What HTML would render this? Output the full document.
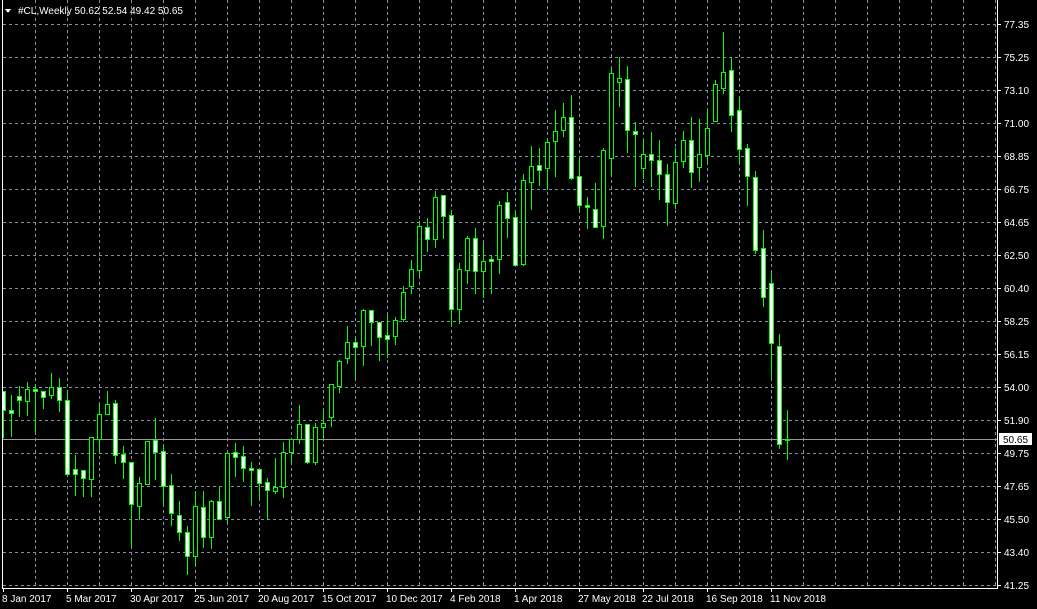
<!DOCTYPE html>
<html><head><meta charset="utf-8"><style>
html,body{margin:0;padding:0;background:#000;width:1037px;height:609px;overflow:hidden}
svg{display:block}
text{font-family:"Liberation Sans",sans-serif;font-size:10px;fill:#fff}
</style></head><body>
<svg width="1037" height="609" xmlns="http://www.w3.org/2000/svg" shape-rendering="crispEdges">
<g stroke="#8590a0" stroke-width="1" stroke-dasharray="3 3" fill="none">
<path d="M3 24.5H996M3 57.5H996M3 90.5H996M3 123.5H996M3 156.5H996M3 189.5H996M3 222.5H996M3 255.5H996M3 288.5H996M3 321.5H996M3 354.5H996M3 387.5H996M3 420.5H996M3 453.5H996M3 486.5H996M3 519.5H996M3 552.5H996M3 585.5H996"/>
<path d="M35.5 0V588M67.5 0V588M99.5 0V588M131.5 0V588M163.5 0V588M195.5 0V588M227.5 0V588M259.5 0V588M291.5 0V588M323.5 0V588M355.5 0V588M387.5 0V588M419.5 0V588M451.5 0V588M483.5 0V588M515.5 0V588M547.5 0V588M579.5 0V588M611.5 0V588M643.5 0V588M675.5 0V588M707.5 0V588M739.5 0V588M771.5 0V588M803.5 0V588M835.5 0V588M867.5 0V588M899.5 0V588M931.5 0V588M963.5 0V588M995.5 0V588"/>
</g>
<rect x="2" y="439" width="995" height="1" fill="#9a9a9a"/>
<path fill="#00ff00" d="M3 391h1v47h-1zM1 391h5v20h-5z
M11 395h1v42h-1zM9 410h5v4h-5z
M19 386h1v31h-1zM17 396h5v5h-5z
M27 382h1v34h-1zM25 389h5v13h-5z
M35 385h1v47h-1zM33 389h5v3h-5z
M43 391h1v18h-1zM41 391h5v7h-5z
M51 373h1v26h-1zM49 387h5v9h-5z
M59 378h1v34h-1zM57 387h5v14h-5z
M67 390h1v85h-1zM65 400h5v75h-5z
M75 455h1v41h-1zM73 469h5v6h-5z
M83 470h1v27h-1zM81 470h5v9h-5z
M91 437h1v60h-1zM89 437h5v43h-5z
M99 404h1v50h-1zM97 414h5v26h-5z
M107 391h1v24h-1zM105 404h5v11h-5z
M115 400h1v64h-1zM113 403h5v53h-5z
M123 446h1v33h-1zM121 454h5v9h-5z
M131 462h1v86h-1zM129 462h5v43h-5z
M139 477h1v43h-1zM137 483h5v24h-5z
M147 441h1v44h-1zM145 441h5v44h-5z
M155 418h1v62h-1zM153 440h5v13h-5z
M163 445h1v59h-1zM161 451h5v36h-5z
M171 474h1v52h-1zM169 485h5v29h-5z
M179 501h1v40h-1zM177 515h5v18h-5z
M187 526h1v49h-1zM185 532h5v25h-5z
M195 491h1v75h-1zM193 506h5v51h-5z
M203 491h1v57h-1zM201 507h5v31h-5z
M211 500h1v49h-1zM209 501h5v37h-5z
M219 487h1v33h-1zM217 501h5v19h-5z
M227 453h1v70h-1zM225 453h5v65h-5z
M235 443h1v34h-1zM233 452h5v6h-5z
M243 446h1v36h-1zM241 456h5v13h-5z
M251 462h1v44h-1zM249 468h5v3h-5z
M259 469h1v29h-1zM257 469h5v15h-5z
M267 478h1v42h-1zM265 482h5v9h-5z
M275 458h1v36h-1zM273 487h5v5h-5z
M283 442h1v56h-1zM281 452h5v36h-5z
M291 439h1v24h-1zM289 439h5v14h-5z
M299 405h1v39h-1zM297 424h5v16h-5z
M307 424h1v40h-1zM305 424h5v39h-5z
M315 423h1v42h-1zM313 427h5v36h-5z
M323 410h1v31h-1zM321 423h5v5h-5z
M331 384h1v43h-1zM329 384h5v34h-5z
M339 360h1v33h-1zM337 361h5v26h-5z
M347 326h1v38h-1zM345 342h5v17h-5z
M355 338h1v40h-1zM353 342h5v6h-5z
M363 309h1v57h-1zM361 310h5v37h-5z
M371 310h1v36h-1zM369 310h5v13h-5z
M379 322h1v39h-1zM377 322h5v16h-5z
M387 315h1v43h-1zM385 335h5v5h-5z
M395 317h1v28h-1zM393 320h5v17h-5z
M403 286h1v36h-1zM401 292h5v28h-5z
M411 260h1v34h-1zM409 269h5v18h-5z
M419 221h1v55h-1zM417 226h5v45h-5z
M427 218h1v34h-1zM425 227h5v13h-5z
M435 191h1v57h-1zM433 197h5v43h-5z
M443 195h1v44h-1zM441 195h5v22h-5z
M451 210h1v116h-1zM449 215h5v95h-5z
M459 263h1v61h-1zM457 269h5v41h-5z
M467 236h1v48h-1zM465 238h5v33h-5z
M475 228h1v66h-1zM473 238h5v34h-5z
M483 243h1v55h-1zM481 261h5v11h-5z
M491 255h1v39h-1zM489 259h5v3h-5z
M499 201h1v73h-1zM497 205h5v55h-5z
M507 192h1v46h-1zM505 202h5v17h-5z
M515 210h1v56h-1zM513 217h5v49h-5z
M523 174h1v92h-1zM521 180h5v85h-5z
M531 146h1v64h-1zM529 166h5v17h-5z
M539 148h1v38h-1zM537 165h5v6h-5z
M547 139h1v51h-1zM545 142h5v27h-5z
M555 110h1v67h-1zM553 131h5v11h-5z
M563 103h1v34h-1zM561 117h5v14h-5z
M571 95h1v85h-1zM569 117h5v62h-5z
M579 158h1v52h-1zM577 176h5v30h-5z
M587 197h1v32h-1zM585 205h5v3h-5z
M595 183h1v45h-1zM593 209h5v19h-5z
M603 148h1v91h-1zM601 150h5v77h-5z
M611 68h1v108h-1zM609 73h5v86h-5z
M619 57h1v50h-1zM617 78h5v5h-5z
M627 66h1v87h-1zM625 79h5v52h-5z
M635 122h1v65h-1zM633 131h5v4h-5z
M643 140h1v39h-1zM641 154h5v15h-5z
M651 132h1v55h-1zM649 154h5v7h-5z
M659 140h1v60h-1zM657 160h5v15h-5z
M667 164h1v62h-1zM665 174h5v29h-5z
M675 148h1v61h-1zM673 162h5v42h-5z
M683 131h1v37h-1zM681 140h5v22h-5z
M691 117h1v71h-1zM689 140h5v33h-5z
M699 119h1v63h-1zM697 154h5v14h-5z
M707 110h1v52h-1zM705 128h5v28h-5z
M715 80h1v42h-1zM713 84h5v38h-5z
M723 32h1v62h-1zM721 72h5v17h-5z
M731 57h1v75h-1zM729 70h5v46h-5z
M739 97h1v67h-1zM737 110h5v40h-5z
M747 144h1v62h-1zM745 148h5v29h-5z
M755 171h1v83h-1zM753 177h5v74h-5z
M763 230h1v77h-1zM761 248h5v50h-5z
M771 273h1v105h-1zM769 283h5v61h-5z
M779 334h1v115h-1zM777 346h5v99h-5z
M787 410h1v50h-1zM785 439h5v2h-5z"/>
<path fill="#ffffff" d="M2 392h3v18h-3zM10 411h3v2h-3zM18 397h3v3h-3zM34 390h3v1h-3zM42 392h3v5h-3zM58 388h3v12h-3zM66 401h3v73h-3zM74 470h3v4h-3zM82 471h3v7h-3zM114 404h3v51h-3zM122 455h3v7h-3zM130 463h3v41h-3zM154 441h3v11h-3zM162 452h3v34h-3zM170 486h3v27h-3zM178 516h3v16h-3zM186 533h3v23h-3zM202 508h3v29h-3zM218 502h3v17h-3zM234 453h3v4h-3zM242 457h3v11h-3zM250 469h3v1h-3zM258 470h3v13h-3zM266 483h3v7h-3zM306 425h3v37h-3zM354 343h3v4h-3zM370 311h3v11h-3zM378 323h3v14h-3zM386 336h3v3h-3zM426 228h3v11h-3zM442 196h3v20h-3zM450 216h3v93h-3zM474 239h3v32h-3zM490 260h3v1h-3zM506 203h3v15h-3zM514 218h3v47h-3zM538 166h3v4h-3zM570 118h3v60h-3zM578 177h3v28h-3zM586 206h3v1h-3zM594 210h3v17h-3zM626 80h3v50h-3zM634 132h3v2h-3zM650 155h3v5h-3zM658 161h3v13h-3zM666 175h3v27h-3zM690 141h3v31h-3zM730 71h3v44h-3zM738 111h3v38h-3zM746 149h3v27h-3zM754 178h3v72h-3zM762 249h3v48h-3zM770 284h3v59h-3zM778 347h3v97h-3z"/>
<path fill="#000000" d="M26 390h3v11h-3zM50 388h3v7h-3zM90 438h3v41h-3zM98 415h3v24h-3zM106 405h3v9h-3zM138 484h3v22h-3zM146 442h3v42h-3zM194 507h3v49h-3zM210 502h3v35h-3zM226 454h3v63h-3zM274 488h3v3h-3zM282 453h3v34h-3zM290 440h3v12h-3zM298 425h3v14h-3zM314 428h3v34h-3zM322 424h3v3h-3zM330 385h3v32h-3zM338 362h3v24h-3zM346 343h3v15h-3zM362 311h3v35h-3zM394 321h3v15h-3zM402 293h3v26h-3zM410 270h3v16h-3zM418 227h3v43h-3zM434 198h3v41h-3zM458 270h3v39h-3zM466 239h3v31h-3zM482 262h3v9h-3zM498 206h3v53h-3zM522 181h3v83h-3zM530 167h3v15h-3zM546 143h3v25h-3zM554 132h3v9h-3zM562 118h3v12h-3zM602 151h3v75h-3zM610 74h3v84h-3zM618 79h3v3h-3zM642 155h3v13h-3zM674 163h3v40h-3zM682 141h3v20h-3zM698 155h3v12h-3zM706 129h3v26h-3zM714 85h3v36h-3zM722 73h3v15h-3z"/>
<rect x="0" y="0" width="2" height="589" fill="#000"/>
<rect x="2" y="0" width="1" height="589" fill="#fff"/>
<rect x="997" y="0" width="1" height="589" fill="#fff"/>
<rect x="2" y="588" width="996" height="1" fill="#fff"/>
<path fill="#fff" d="M998 24h3v1h-3zM998 57h3v1h-3zM998 90h3v1h-3zM998 123h3v1h-3zM998 156h3v1h-3zM998 189h3v1h-3zM998 222h3v1h-3zM998 255h3v1h-3zM998 288h3v1h-3zM998 321h3v1h-3zM998 354h3v1h-3zM998 387h3v1h-3zM998 420h3v1h-3zM998 453h3v1h-3zM998 486h3v1h-3zM998 519h3v1h-3zM998 552h3v1h-3zM998 585h3v1h-3zM3 589h1v3h-1zM67 589h1v3h-1zM131 589h1v3h-1zM195 589h1v3h-1zM259 589h1v3h-1zM323 589h1v3h-1zM387 589h1v3h-1zM451 589h1v3h-1zM515 589h1v3h-1zM579 589h1v3h-1zM643 589h1v3h-1zM707 589h1v3h-1zM771 589h1v3h-1z"/>
<polygon points="5,9 11,9 8,13" fill="#fff"/>
<text x="18" y="14">#CL,Weekly  50.62 52.54 49.42 50.65</text>
<text x="1004" y="28">77.35</text>
<text x="1004" y="61">75.25</text>
<text x="1004" y="94">73.10</text>
<text x="1004" y="127">71.00</text>
<text x="1004" y="160">68.85</text>
<text x="1004" y="193">66.75</text>
<text x="1004" y="226">64.65</text>
<text x="1004" y="259">62.50</text>
<text x="1004" y="292">60.40</text>
<text x="1004" y="325">58.25</text>
<text x="1004" y="358">56.15</text>
<text x="1004" y="391">54.00</text>
<text x="1004" y="424">51.90</text>
<text x="1004" y="457">49.75</text>
<text x="1004" y="490">47.65</text>
<text x="1004" y="523">45.50</text>
<text x="1004" y="556">43.40</text>
<text x="1004" y="589">41.25</text>
<rect x="999" y="433" width="33" height="12" fill="#fff"/>
<text x="1003" y="443" style="fill:#000">50.65</text>
<text x="2" y="602">8 Jan 2017</text>
<text x="66" y="602">5 Mar 2017</text>
<text x="130" y="602">30 Apr 2017</text>
<text x="194" y="602">25 Jun 2017</text>
<text x="258" y="602">20 Aug 2017</text>
<text x="322" y="602">15 Oct 2017</text>
<text x="386" y="602">10 Dec 2017</text>
<text x="450" y="602">4 Feb 2018</text>
<text x="514" y="602">1 Apr 2018</text>
<text x="578" y="602">27 May 2018</text>
<text x="642" y="602">22 Jul 2018</text>
<text x="706" y="602">16 Sep 2018</text>
<text x="770" y="602">11 Nov 2018</text>
</svg>
</body></html>
